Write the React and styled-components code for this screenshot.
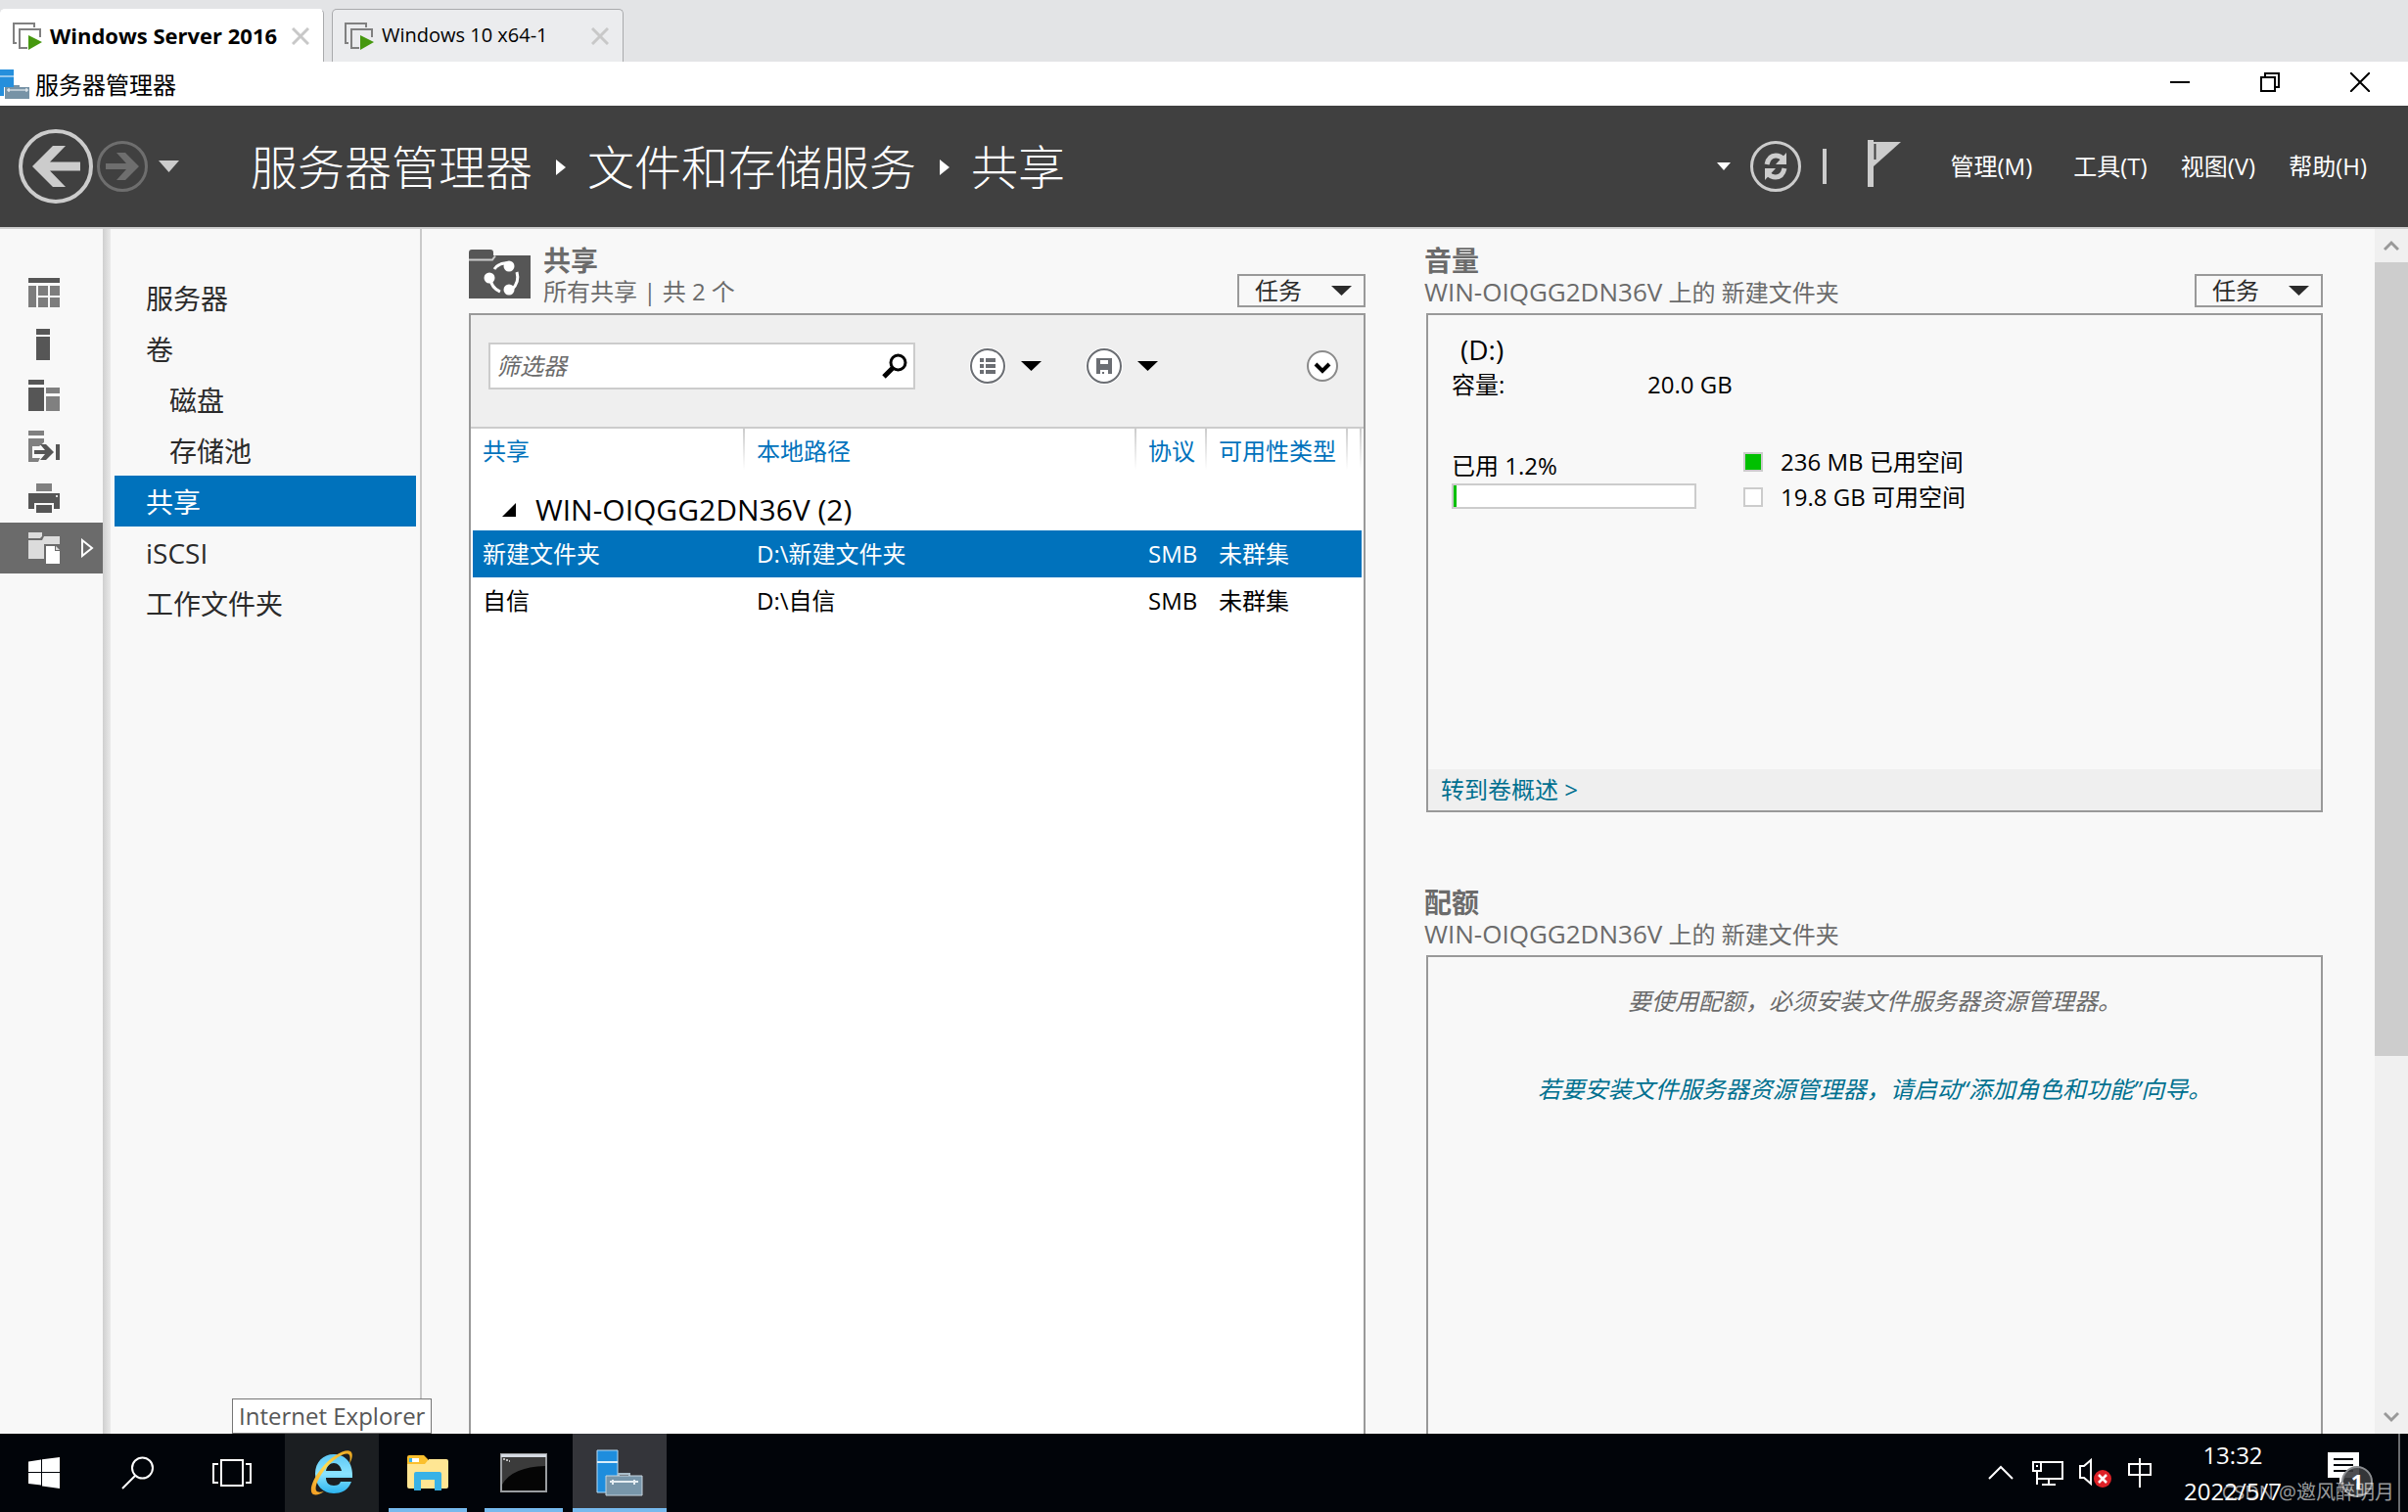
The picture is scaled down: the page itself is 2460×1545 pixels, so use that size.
import React from "react";
import styled, { createGlobalStyle, css } from "styled-components";

const fontStack = `"Open Sans", "Noto Sans CJK SC", sans-serif`;

const GlobalStyle = createGlobalStyle`
  *, *::before, *::after { box-sizing: border-box; }
  body { margin: 0; font-family: ${fontStack}; font-size: 24px; line-height: 32px; color: #000; background: #f8f8f8; }
  button, input { font: inherit; color: inherit; }
  a { color: inherit; text-decoration: none; }
  h1, h2, p, ul, ol, dl, dd { margin: 0; padding: 0; font-weight: inherit; }
  ul, ol { list-style: none; }
  svg { display: block; flex: none; }
`;

const Screen = styled.div`
  display: flex;
  flex-direction: column;
  height: 100vh;
  overflow: hidden;
`;

const PlainButton = styled.button`
  display: flex;
  align-items: center;
  justify-content: center;
  padding: 0;
  border: 0;
  background: none;
  flex: none;
`;

/* ---------- virtual machine tabs ---------- */
const TabStrip = styled.div`
  display: flex;
  align-items: flex-end;
  gap: 8px;
  height: 63px;
  flex: none;
  background: #e3e4e6;
`;

const VmTab = styled.div`
  display: flex;
  align-items: center;
  width: ${(p) => (p.$active ? 331 : 298)}px;
  height: 54px;
  padding: 0 14px 0 12px;
  border: 1px solid ${(p) => (p.$active ? "#fff" : "#a9aaac")};
  border-right-color: #a9aaac;
  border-bottom: 0;
  border-radius: 5px 5px 0 0;
  background: ${(p) => (p.$active ? "#fff" : "#ebecee")};
  font-size: ${(p) => (p.$active ? 22 : 20)}px;
  font-weight: ${(p) => (p.$active ? 700 : 400)};
  white-space: nowrap;
`;

const TabName = styled.span`
  flex: 1;
  padding: 0 0 2px 8px;
`;

/* ---------- window title ---------- */
const TitleBar = styled.header`
  display: flex;
  align-items: center;
  height: 45px;
  flex: none;
  background: #fff;
`;

const WindowTitle = styled.span`
  flex: 1;
  padding: 2px 0 0 5px;
`;

const WindowButton = styled(PlainButton)`
  width: 92px;
  height: 45px;
  padding-bottom: 4px;
`;

const WindowButtons = styled.div`
  display: flex;
  padding-right: 3px;
`;

/* ---------- navigation header ---------- */
const NavHeader = styled.div`
  display: flex;
  align-items: center;
  height: 126px;
  flex: none;
  padding: 0 42px 0 19px;
  background: #404040;
  border-bottom: 2px solid #cfcfcf;
  color: #fff;
`;

const History = styled.div`
  display: flex;
  align-items: center;
  gap: 4px;
  width: 237px;
  flex: none;
`;

const HistoryMenu = styled(PlainButton)`
  margin-left: 7px;
`;

const Crumbs = styled.ol`
  display: flex;
  align-items: center;
  flex: 1;
  padding-top: 2px;
  font-size: 48px;
  line-height: 64px;
  font-weight: 300;
  white-space: nowrap;
`;

const Crumb = styled.li`
  display: flex;
  align-items: center;
  gap: 24px;
  padding-right: 22px;
`;

const HeaderTools = styled.div`
  display: flex;
  align-items: center;
`;

const Refresh = styled(PlainButton)`
  margin: 0 22px 0 20px;
`;

const Flag = styled(PlainButton)`
  margin: 0 51px 6px 42px;
`;

const Menus = styled.nav`
  display: flex;
  gap: 34px;
  white-space: nowrap;
`;

const MenuButton = styled(PlainButton)`
  &:first-child { margin-right: 8px; }
`;

const Divider = styled.span`
  width: 4px;
  height: 36px;
  background: #ccc;
`;

/* ---------- body ---------- */
const Body = styled.div`
  display: flex;
  flex: 1;
  min-height: 0;
  background: #f8f8f8;
`;

const Rail = styled.nav`
  display: flex;
  flex-direction: column;
  width: 105px;
  flex: none;
  padding-top: 40px;
`;

const RailButton = styled(PlainButton)`
  justify-content: flex-start;
  gap: 22px;
  height: 52px;
  padding-left: 29px;
  background: ${(p) => (p.$active ? "#6b6b6b" : "none")};
`;

const Splitter = styled.div`
  width: 8px;
  flex: none;
  background: linear-gradient(90deg, #cfcfcf, #eaeaea);
`;

const Sidebar = styled.nav`
  width: 318px;
  flex: none;
  padding: 44px 4px 0;
  border-right: 2px solid #c9c9c9;
`;

const SideLink = styled.a`
  display: block;
  height: 52px;
  padding-left: ${(p) => (p.$nested ? 56 : 32)}px;
  font-size: 28px;
  line-height: 54px;
  color: ${(p) => (p.$active ? "#fff" : "#2b2b2b")};
  background: ${(p) => (p.$active ? "#0072bc" : "none")};
`;

const Content = styled.main`
  display: grid;
  grid-template-columns: minmax(0, 1fr) minmax(0, 1fr);
  gap: 62px;
  flex: 1;
  min-width: 0;
  padding: 0 53px 0 48px;
  overflow: hidden;
`;

const Column = styled.div`
  display: flex;
  flex-direction: column;
  gap: 60px;
  min-height: 0;
`;

const Section = styled.section`
  display: flex;
  flex-direction: column;
  flex: ${(p) => (p.$grow ? "1" : "none")};
  min-height: 0;
`;

const SectionHead = styled.div`
  display: flex;
  align-items: flex-start;
  height: 86px;
  flex: none;
  padding-top: 16px;
  color: #6b6b6b;
`;

const SectionIcon = styled.span`
  padding: 4px 15px 0 0;
`;

const Heading = styled.div`
  flex: 1;
  min-width: 0;
  margin-left: -2px;
  white-space: nowrap;
`;

const SectionTitle = styled.h2`
  font-size: 28px;
  line-height: 32px;
  font-weight: 700;
`;

const ServerName = styled.span`
  font-size: 26px;
`;

const TaskButton = styled(PlainButton)`
  justify-content: space-between;
  width: 131px;
  height: 34px;
  margin-top: 30px;
  padding: 0 12px 0 16px;
  border: 2px solid #999;
  color: #2b2b2b;
  line-height: 28px;
`;

const Panel = styled.div`
  display: flex;
  flex-direction: column;
  border: 2px solid #999;
  ${(p) => p.$cut && css`
    flex: 1;
    border-bottom: 0;
  `}
  ${(p) => p.$fill && css`
    background: #fff;
  `}
`;

/* ---------- share list ---------- */
const Toolbar = styled.div`
  display: flex;
  align-items: center;
  height: 116px;
  padding: 0 26px 10px 18px;
  background: #efefef;
  border-bottom: 2px solid #ccc;
`;

const FilterBox = styled.label`
  display: flex;
  align-items: center;
  width: 436px;
  height: 48px;
  padding: 0 6px;
  border: 2px solid #ccc;
  background: #fff;
`;

const FilterInput = styled.input`
  flex: 1;
  min-width: 0;
  padding: 0;
  border: 0;
  outline: 0;
  background: none;
  font-style: italic;
  &::placeholder { color: #6b6b6b; opacity: 1; }
`;

const ToolGroup = styled.div`
  display: flex;
  align-items: center;
  gap: 15px;
  margin-left: ${(p) => (p.$first ? 55 : 45)}px;
`;

const ExpandButton = styled(PlainButton)`
  margin-left: auto;
`;

const ShareTable = styled.table`
  width: calc(100% - 4px);
  margin: 0 2px;
  table-layout: fixed;
  border-collapse: collapse;
  text-align: left;
  white-space: nowrap;
`;

const HeadCell = styled.th`
  height: 62px;
  padding: 0 0 16px ${(p) => (p.$first ? 10 : 12)}px;
  color: #0072bc;
  font-weight: 400;
  background: linear-gradient(#ccc, #fff) right top / 2px 42px no-repeat;
`;

const GroupCell = styled.td`
  height: 42px;
  padding: 0 0 0 30px;
  font-size: 30px;
`;

const GroupLabel = styled.span`
  display: flex;
  align-items: center;
  gap: 20px;
`;

const Row = styled.tr`
  color: ${(p) => (p.$selected ? "#fff" : "#000")};
  background: ${(p) => (p.$selected ? "#0072bc" : "none")};
`;

const Cell = styled.td`
  height: 48px;
  padding: 0 0 0 ${(p) => (p.$first ? 10 : 12)}px;
`;

const Col = styled.col`
  width: ${(p) => (p.$w ? `${p.$w}px` : "auto")};
`;

/* ---------- volume ---------- */
const VolumeInfo = styled.div`
  min-height: 464px;
  padding: 15px 24px;
`;

const VolumeName = styled.div`
  padding-left: 9px;
  font-size: 28px;
  line-height: 40px;
`;

const Capacity = styled.dl`
  display: grid;
  grid-template-columns: 200px auto;
`;

const Usage = styled.div`
  display: grid;
  grid-template-columns: 250px auto;
  gap: 48px;
  margin-top: 45px;
`;

const UsedLabel = styled.div`
  padding: 6px 0 2px;
`;

const Track = styled.div`
  height: 26px;
  border: 2px solid #ccc;
  background: #fff;
`;

const Fill = styled.div`
  height: 100%;
  background: #00c000;
`;

const LegendItem = styled.li`
  display: flex;
  align-items: center;
  gap: 18px;
  line-height: 36px;
`;

const Swatch = styled.span`
  width: 20px;
  height: 20px;
  border: 2px solid #ccc;
  background: ${(p) => p.$color};
`;

const PanelFooter = styled.div`
  height: 42px;
  padding-left: 13px;
  background: #efefef;
  color: #00708f;
  line-height: 42px;
`;

const QuotaText = styled.div`
  display: flex;
  flex-direction: column;
  align-items: center;
  gap: 58px;
  padding-top: 29px;
  color: #6b6b6b;
  font-style: italic;
`;

const QuotaLink = styled.a`
  color: #00708f;
`;

/* ---------- scroll bar ---------- */
const ScrollBar = styled.div`
  display: flex;
  flex-direction: column;
  width: 34px;
  flex: none;
  background: #f0f0f0;
`;

const ScrollStep = styled(PlainButton)`
  height: 34px;
`;

const ScrollTrack = styled.div`
  flex: 1;
`;

const Thumb = styled.div`
  height: 69.7%;
  background: #cdcdcd;
`;

/* ---------- taskbar ---------- */
const Taskbar = styled.footer`
  position: relative;
  display: flex;
  height: 80px;
  flex: none;
  background: #010409;
  color: #fff;
`;

const TaskTools = styled.div`
  display: flex;
  margin: 0 6px 0 -3px;
`;

const AppButton = styled(PlainButton)`
  width: 96px;
  background: ${(p) => p.$bg || "none"};
  box-shadow: ${(p) => (p.$full ? "inset 0 -4px #76b9ed" : "none")};
`;

const RunningButton = styled(AppButton)`
  width: 80px;
  margin: 0 ${(p) => (p.$last ? 10 : 8)}px 0 10px;
  box-shadow: inset 0 -4px #76b9ed;
`;

const TaskApps = styled.div`
  display: flex;
  flex: 1;
`;

const Tray = styled.div`
  display: flex;
  align-items: center;
  gap: 16px;
`;

const TrayToggle = styled(PlainButton)`
  margin-right: 3px;
`;

const Clock = styled.div`
  width: 116px;
  margin-left: 9px;
  text-align: center;
  line-height: 37px;
`;

const Notices = styled(PlainButton)`
  margin: 7px 24px 0 39px;
`;

const ShowDesktop = styled(PlainButton)`
  width: 10px;
  align-self: stretch;
  border-left: 2px solid #6a6c6f;
`;

const Tooltip = styled.div`
  position: absolute;
  left: 237px;
  bottom: 80px;
  height: 36px;
  padding: 0 6px;
  border: 1px solid #767676;
  background: #fff;
  color: #575757;
  line-height: 34px;
  white-space: nowrap;
`;

const Watermark = styled.div`
  position: absolute;
  right: 14px;
  bottom: 4px;
  color: rgba(255, 255, 255, 0.6);
  font-size: 20px;
  white-space: nowrap;
`;

/* ---------- icons ---------- */
const VmIcon = () => (
  <svg width="30" height="30" viewBox="0 0 30 30" fill="none">
    <path d="M22 6V2H1v20h3" stroke="#808080" strokeWidth="2" />
    <path d="M15 27H7V8h21v8" stroke="#808080" strokeWidth="2" />
    <path d="M16 14l14 7-14 8z" fill="#46980f" />
  </svg>
);

const TabClose = () => (
  <svg width="18" height="18" viewBox="0 0 18 18" stroke="#c8c8c8" strokeWidth="3">
    <path d="M1 1l16 16M17 1L1 17" />
  </svg>
);

const ServerSmall = () => (
  <svg width="31" height="32" viewBox="0 0 31 32">
    <path d="M0 1h14v27H0z" fill="#258fdc" />
    <path d="M0 8h14" stroke="#fff" />
    <path d="M4 19h10v-3h7v3h10v13H4z" fill="#fff" />
    <path d="M5 19h25v12H5z" fill="#7793a6" />
    <path d="M14 17h6v2h-6z" fill="#7793a6" />
    <path d="M7 22h22M9 20v4M27 20v4" stroke="#fff" />
  </svg>
);

const Tri = ({ w = 21, h = 10, color = "#000" }) => (
  <svg width={w} height={h} viewBox="0 0 20 10" preserveAspectRatio="none">
    <path d="M0 0h20L10 10z" fill={color} />
  </svg>
);

const CrumbArrow = () => (
  <svg width="10" height="16" viewBox="0 0 10 16"><path d="M0 0l10 8-10 8z" fill="#fff" /></svg>
);

const BackIcon = () => (
  <svg width="76" height="76" viewBox="0 0 76 76" fill="none">
    <circle cx="38" cy="38" r="36" stroke="#ccc" strokeWidth="4" />
    <path d="M14 38L35 17h13L32 33.500h31v9H32L48 59H35z" fill="#ccc" />
  </svg>
);

const ForwardIcon = () => (
  <svg width="52" height="52" viewBox="0 0 52 52" fill="none">
    <circle cx="26" cy="26" r="24.500" stroke="#6e6e6e" strokeWidth="3" />
    <path d="M43 26L29 12h-9l10 11H9v6h21L20 40h9z" fill="#6e6e6e" />
  </svg>
);

const RefreshIcon = () => (
  <svg width="52" height="52" viewBox="0 0 52 52" fill="none">
    <circle cx="26" cy="26" r="24.500" stroke="#ccc" strokeWidth="3" />
    <path d="M17 24q2-9 9-9 5 0 8 4" stroke="#ccc" strokeWidth="5" />
    <path d="M37 12v12H26z" fill="#ccc" />
    <path d="M35 28q-2 9-9 9-5 0-8-4" stroke="#ccc" strokeWidth="5" />
    <path d="M15 40V28h11z" fill="#ccc" />
  </svg>
);

const FlagIcon = () => (
  <svg width="34" height="48" viewBox="0 0 34 48">
    <path d="M0 0h6v48H0z" fill="#ccc" />
    <path d="M6 2h28L6 27z" fill="#ccc" />
    <path d="M7.500 4v16" stroke="#404040" strokeWidth="2" />
  </svg>
);

const RailIcons = {
  dashboard: (
    <svg width="32" height="32" viewBox="0 0 32 32">
      <path d="M0 0h32v5H0z" fill="#565656" />
      <path d="M0 8h8v22H0zM10 8h10v10H10zM22 8h10v10H22zM10 20h10v10H10zM22 20h10v10H22z" fill="#7d7d7d" />
    </svg>
  ),
  local: (
    <svg width="32" height="32" viewBox="0 0 32 32"><path d="M8 0h14v6H8zM8 8h14v24H8z" fill="#565656" /></svg>
  ),
  all: (
    <svg width="32" height="32" viewBox="0 0 32 32">
      <path d="M0 0h16v5H0zM0 8h16v24H0z" fill="#565656" />
      <path d="M18 8h14v6H18zM18 17h14v15H18z" fill="#808080" />
    </svg>
  ),
  failover: (
    <svg width="32" height="32" viewBox="0 0 32 32">
      <path d="M0 0h16v5H0zM0 8h16v4l-5 4H4v12h8l-2 4H0z" fill="#808080" />
      <path d="M6 20h11l-5-6h6l8 8-8 8h-6l5-6H6z" fill="#565656" />
      <path d="M28 14h4v16h-4z" fill="#565656" />
    </svg>
  ),
  print: (
    <svg width="32" height="32" viewBox="0 0 32 32">
      <path d="M8 2h16v8H8z" fill="#808080" />
      <path d="M0 12h32v16h-6v-6H6v6H0z" fill="#565656" />
      <path d="M8 24h16v8H8z" fill="#565656" />
      <path d="M28 14h2v2h-2z" fill="#ddd" />
    </svg>
  ),
  storage: (
    <svg width="32" height="32" viewBox="0 0 32 32">
      <path d="M0 0h14v4l-2 2H0zM0 8h14l2-4h16v8H16v15H0z" fill="#dcdcdc" />
      <path d="M18 14h9v5h5v13H18z" fill="#fff" />
      <path d="M28 14l4 4h-4z" fill="#dcdcdc" />
    </svg>
  ),
};

const ShareIcon = () => (
  <svg width="63" height="52" viewBox="0 0 63 52" fill="none">
    <path d="M0 4q0-3 3-3h19q3 0 3 3v3h38v44H0z" fill="#565656" />
    <path d="M0 11.500h24l3-4" stroke="#ccc" strokeWidth="2" />
    <g stroke="#fff" strokeWidth="3">
      <path d="M26 21q5-7 14-6" />
      <path d="M49 24q3 10-5 18" />
      <path d="M22 31q1 9 10 13" />
    </g>
    <circle cx="41" cy="18" r="5.500" fill="#fff" />
    <circle cx="21" cy="30" r="5.500" fill="#fff" />
    <circle cx="41" cy="42" r="5.500" fill="#fff" />
  </svg>
);

const FilterSearch = () => (
  <svg width="26" height="26" viewBox="0 0 26 26" fill="none" stroke="#000">
    <circle cx="16.500" cy="9.500" r="7.500" strokeWidth="3" />
    <path d="M11 15l-9 9" strokeWidth="5" />
  </svg>
);

const ListIcon = () => (
  <svg width="38" height="38" viewBox="0 0 38 38">
    <circle cx="19" cy="19" r="19" fill="#fff" />
    <circle cx="19" cy="19" r="17" fill="#fff" stroke="#6b6e73" strokeWidth="2" />
    <path d="M11 11h4v4h-4zM17 11h10v4H17zM11 17h4v4h-4zM17 17h10v4H17zM11 23h4v4h-4zM17 23h10v4H17z" fill="#6b6e73" />
  </svg>
);

const SaveIcon = () => (
  <svg width="38" height="38" viewBox="0 0 38 38">
    <circle cx="19" cy="19" r="19" fill="#fff" />
    <circle cx="19" cy="19" r="17" fill="#fff" stroke="#6b6e73" strokeWidth="2" />
    <path d="M11 11h16v16h-4v-4h-8v4h-4z" fill="#6b6e73" />
    <path d="M15 13h8v4h-8z" fill="#fff" />
    <path d="M17 25h2v2h-2z" fill="#6b6e73" />
  </svg>
);

const ExpandIcon = () => (
  <svg width="32" height="32" viewBox="0 0 32 32" fill="none">
    <circle cx="16" cy="16" r="15" fill="#fff" stroke="#8a8a8a" strokeWidth="2" />
    <path d="M9 14l7 7 7-7" stroke="#000" strokeWidth="4" />
  </svg>
);

const ScrollChevron = ({ down }) => (
  <svg width="16" height="12" viewBox="0 0 16 12" fill="none" stroke="#999" strokeWidth="3">
    <path d={down ? "M1 2l7 7 7-7" : "M1 10l7-7 7 7"} />
  </svg>
);

const StartIcon = () => (
  <svg width="32" height="32" viewBox="0 0 32 32" fill="#fff">
    <path d="M0 4.500L13 2.500V15H0zM14 2.300L32 0v15H14zM0 16h13v12.500L0 27zM14 16h18v16l-18-2.500z" />
  </svg>
);

const SearchIcon = () => (
  <svg width="34" height="34" viewBox="0 0 34 34" fill="none" stroke="#fff" strokeWidth="2">
    <circle cx="21.500" cy="12" r="10.500" />
    <path d="M14 20L1 33" />
  </svg>
);

const TaskViewIcon = () => (
  <svg width="40" height="28" viewBox="0 0 40 28" fill="none" stroke="#fff" strokeWidth="2">
    <path d="M9 1h22v26H9zM6 5H1v19h5M34 5h5v19h-5" />
  </svg>
);

const IeIcon = () => (
  <svg width="46" height="46" viewBox="0 0 46 46" fill="none">
    <defs>
      <linearGradient id="ieBlue" x1="0" y1="0" x2="0" y2="1">
        <stop offset="0" stopColor="#5cc8f5" />
        <stop offset="0.5" stopColor="#8be4ff" />
        <stop offset="1" stopColor="#2bb3ee" />
      </linearGradient>
      <linearGradient id="ieGold" x1="0" y1="1" x2="1" y2="0">
        <stop offset="0" stopColor="#f29a1f" />
        <stop offset="0.5" stopColor="#ffdc52" />
        <stop offset="1" stopColor="#e9a21c" />
      </linearGradient>
    </defs>
    <path
      fill="url(#ieBlue)"
      fillRule="evenodd"
      d="M25 4C14 4 6 12 6 24s8 20 19 20c9 0 15-4 18-12H32c-1 3-4 4-7 4-5 0-8-3-8-8h27C45 13 37 4 25 4zM17 21c1-5 4-8 8-8s7 3 8 8z"
    />
    <path
      fill="url(#ieGold)"
      d="M41 14c3-6 4-11 1-13C37-2 22 6 12 19 3 30-1 42 4 45c3 1 7 0 11-3-4 1-7 1-8-1-2-4 3-15 11-24C26 8 36 2 40 4c2 1 2 5 1 10z"
    />
  </svg>
);

const FolderIcon = () => (
  <svg width="42" height="36" viewBox="0 0 42 36">
    <path d="M0 2q0-2 2-2h15l4 4v6H0z" fill="#fbc02d" />
    <path d="M2 3h10v4H2z" fill="#fff" />
    <path d="M2 3h3v4H2z" fill="#3fb4e8" />
    <path d="M0 9h18l4-5h18q2 0 2 2v26q0 2-2 2H2q-2 0-2-2z" fill="#ffe693" />
    <path d="M7 19q0-2 2-2h24q2 0 2 2v17h-7V25H14v11H7z" fill="#38b2e7" />
  </svg>
);

const CmdIcon = () => (
  <svg width="48" height="40" viewBox="0 0 48 40">
    <path d="M1 1h46v38H1z" fill="#050505" stroke="#9a9da0" strokeWidth="2" />
    <path d="M2 4h44v9Q12 14 2 32z" fill="#3b3b3b" />
    <path d="M1 1h46v3H1z" fill="#d5dae2" />
    <path d="M3 6h2M6 7h2M9 8h1" stroke="#bbb" strokeWidth="2" />
  </svg>
);

const ServerIcon = () => (
  <svg width="48" height="48" viewBox="0 0 48 48" fill="none">
    <path d="M1 1h21v43H1z" fill="#1e8ddd" stroke="#b7dcf5" />
    <path d="M1 13h21" stroke="#d8edfa" strokeWidth="2" />
    <path d="M23 28v-3h11v3" stroke="#a9bcc8" strokeWidth="2" />
    <path d="M10 27h37v20H10z" fill="#7896aa" stroke="#c7d5de" />
    <path d="M14 33h29M17 31v5M39 31v5" stroke="#e5edf2" strokeWidth="2" />
  </svg>
);

const TrayUp = () => (
  <svg width="26" height="16" viewBox="0 0 26 16" fill="none" stroke="#fff" strokeWidth="2">
    <path d="M1 14L13 2l12 12" />
  </svg>
);

const NetworkIcon = () => (
  <svg width="32" height="28" viewBox="0 0 32 28" fill="none" stroke="#fff" strokeWidth="2">
    <path d="M9 3h22v17H5M1 3h8v9H1zM5 12v14M10 26h14M17 20v6" />
    <path d="M4 7h2" />
  </svg>
);

const VolumeIcon = () => (
  <svg width="34" height="30" viewBox="0 0 34 30" fill="none">
    <path d="M1 8h4l7-6v24l-7-6H1z" stroke="#fff" strokeWidth="2" />
    <circle cx="24" cy="21" r="9" fill="#dd2127" />
    <path d="M20 17l8 8M28 17l-8 8" stroke="#fff" strokeWidth="2.500" />
  </svg>
);

const ImeIcon = () => (
  <svg width="24" height="30" viewBox="0 0 24 30" fill="none" stroke="#fff" strokeWidth="2">
    <path d="M1 6h22v11H1zM12 0v30" />
  </svg>
);

const NoticeIcon = () => (
  <svg width="48" height="49" viewBox="0 0 48 49">
    <path d="M0 0h32v26H18l-6 6v-6H0z" fill="#fff" />
    <path d="M6 7h20M6 13h20M6 19h20" stroke="#010409" strokeWidth="2" />
    <circle cx="30" cy="30" r="15" fill="#3a3b3e" fillOpacity="0.9" stroke="#8c8e91" strokeWidth="2" />
    <text x="30" y="38" textAnchor="middle" fontSize="22" fontWeight="700" fill="#fff">1</text>
  </svg>
);

/* ---------- data ---------- */
const railItems = [
  ["dashboard", "仪表板"],
  ["local", "本地服务器"],
  ["all", "所有服务器"],
  ["failover", "远程访问"],
  ["print", "打印服务"],
  ["storage", "文件和存储服务"],
];

const sideItems = [
  { name: "服务器" },
  { name: "卷" },
  { name: "磁盘", nested: true },
  { name: "存储池", nested: true },
  { name: "共享", active: true },
  { name: "iSCSI" },
  { name: "工作文件夹" },
];

const shares = [
  { name: "新建文件夹", path: "D:\\新建文件夹", selected: true },
  { name: "自信", path: "D:\\自信" },
];

const menus = ["管理(M)", "工具(T)", "视图(V)", "帮助(H)"];
const crumbs = ["服务器管理器", "文件和存储服务", "共享"];
const usedPercent = 1.2;

function SectionHeader({ icon, title, subtitle, tasks }) {
  return (
    <SectionHead>
      {icon && <SectionIcon>{icon}</SectionIcon>}
      <Heading>
        <SectionTitle>{title}</SectionTitle>
        <p>{subtitle}</p>
      </Heading>
      {tasks && (
        <TaskButton type="button">
          任务
          <Tri color="#2b2b2b" />
        </TaskButton>
      )}
    </SectionHead>
  );
}

function Shares() {
  return (
    <Section $grow>
      <SectionHeader icon={<ShareIcon />} title="共享" subtitle="所有共享 | 共 2 个" tasks />
      <Panel $cut $fill>
        <Toolbar>
          <FilterBox>
            <FilterInput type="text" placeholder="筛选器" aria-label="筛选器" />
            <FilterSearch />
          </FilterBox>
          <ToolGroup $first>
            <PlainButton type="button" aria-label="条件"><ListIcon /></PlainButton>
            <PlainButton type="button" aria-label="条件菜单"><Tri /></PlainButton>
          </ToolGroup>
          <ToolGroup>
            <PlainButton type="button" aria-label="保存"><SaveIcon /></PlainButton>
            <PlainButton type="button" aria-label="保存菜单"><Tri /></PlainButton>
          </ToolGroup>
          <ExpandButton type="button" aria-label="展开"><ExpandIcon /></ExpandButton>
        </Toolbar>
        <ShareTable>
          <colgroup>
            <Col $w={278} />
            <Col />
            <Col $w={72} />
            <Col $w={144} />
            <Col $w={14} />
          </colgroup>
          <thead>
            <tr>
              <HeadCell $first>共享</HeadCell>
              <HeadCell>本地路径</HeadCell>
              <HeadCell>协议</HeadCell>
              <HeadCell>可用性类型</HeadCell>
              <HeadCell />
            </tr>
          </thead>
          <tbody>
            <tr>
              <GroupCell colSpan={5}>
                <GroupLabel>
                  <svg width="14" height="14" viewBox="0 0 14 14"><path d="M14 0v14H0z" /></svg>
                  WIN-OIQGG2DN36V (2)
                </GroupLabel>
              </GroupCell>
            </tr>
            {shares.map((s) => (
              <Row key={s.name} $selected={s.selected}>
                <Cell $first>{s.name}</Cell>
                <Cell>{s.path}</Cell>
                <Cell>SMB</Cell>
                <Cell colSpan={2}>未群集</Cell>
              </Row>
            ))}
          </tbody>
        </ShareTable>
      </Panel>
    </Section>
  );
}

const sourceShare = (
  <>
    <ServerName>WIN-OIQGG2DN36V</ServerName> 上的 新建文件夹
  </>
);

function Volume() {
  return (
    <Section>
      <SectionHeader title="音量" subtitle={sourceShare} tasks />
      <Panel>
        <VolumeInfo>
          <VolumeName>(D:)</VolumeName>
          <Capacity>
            <dt>容量:</dt>
            <dd>20.0 GB</dd>
          </Capacity>
          <Usage>
            <div>
              <UsedLabel id="used">已用 1.2%</UsedLabel>
              <Track role="progressbar" aria-labelledby="used" aria-valuenow={usedPercent}>
                <Fill style={{ width: `${usedPercent}%` }} />
              </Track>
            </div>
            <ul>
              <LegendItem><Swatch $color="#00c000" />236 MB 已用空间</LegendItem>
              <LegendItem><Swatch $color="#fff" />19.8 GB 可用空间</LegendItem>
            </ul>
          </Usage>
        </VolumeInfo>
        <PanelFooter><a href="#volumes">转到卷概述 &gt;</a></PanelFooter>
      </Panel>
    </Section>
  );
}

function Quota() {
  return (
    <Section $grow>
      <SectionHeader title="配额" subtitle={sourceShare} />
      <Panel $cut>
        <QuotaText>
          <p>要使用配额，必须安装文件服务器资源管理器。</p>
          <QuotaLink href="#wizard">若要安装文件服务器资源管理器，请启动“添加角色和功能”向导。</QuotaLink>
        </QuotaText>
      </Panel>
    </Section>
  );
}

export default function App() {
  return (
    <>
      <GlobalStyle />
      <Screen>
        <TabStrip>
          <VmTab $active>
            <VmIcon />
            <TabName>Windows Server 2016</TabName>
            <PlainButton type="button" aria-label="关闭"><TabClose /></PlainButton>
          </VmTab>
          <VmTab>
            <VmIcon />
            <TabName>Windows 10 x64-1</TabName>
            <PlainButton type="button" aria-label="关闭"><TabClose /></PlainButton>
          </VmTab>
        </TabStrip>

        <TitleBar>
          <ServerSmall />
          <WindowTitle>服务器管理器</WindowTitle>
          <WindowButtons>
            <WindowButton type="button" aria-label="最小化">
              <svg width="20" height="20" viewBox="0 0 20 20"><path d="M0 10h20" stroke="#000" strokeWidth="2" /></svg>
            </WindowButton>
            <WindowButton type="button" aria-label="还原">
              <svg width="20" height="20" viewBox="0 0 20 20" fill="none" stroke="#000" strokeWidth="2">
                <path d="M1 5h14v14H1zM5 5V1h14v14h-4" />
              </svg>
            </WindowButton>
            <WindowButton type="button" aria-label="关闭窗口">
              <svg width="20" height="20" viewBox="0 0 20 20" stroke="#000" strokeWidth="2"><path d="M0 0l20 20M20 0L0 20" /></svg>
            </WindowButton>
          </WindowButtons>
        </TitleBar>

        <NavHeader>
          <History>
            <PlainButton type="button" aria-label="后退"><BackIcon /></PlainButton>
            <PlainButton type="button" aria-label="前进"><ForwardIcon /></PlainButton>
            <HistoryMenu type="button" aria-label="历史记录"><Tri h={12} color="#ccc" /></HistoryMenu>
          </History>
          <Crumbs>
            {crumbs.map((c, i) => (
              <Crumb key={c}>
                {c}
                {i < crumbs.length - 1 && <CrumbArrow />}
              </Crumb>
            ))}
          </Crumbs>
          <HeaderTools>
            <PlainButton type="button" aria-label="更多"><Tri w={14} h={8} color="#fff" /></PlainButton>
            <Refresh type="button" aria-label="刷新"><RefreshIcon /></Refresh>
            <Divider />
            <Flag type="button" aria-label="通知"><FlagIcon /></Flag>
            <Menus>
              {menus.map((m) => (
                <MenuButton type="button" key={m}>{m}</MenuButton>
              ))}
            </Menus>
          </HeaderTools>
        </NavHeader>

        <Body>
          <Rail>
            {railItems.map(([key, label]) => (
              <RailButton type="button" key={key} aria-label={label} $active={key === "storage"}>
                {RailIcons[key]}
                {key === "storage" && (
                  <svg width="13" height="20" viewBox="0 0 13 20" fill="none" stroke="#fff" strokeWidth="2">
                    <path d="M1 2l10 8-10 8z" />
                  </svg>
                )}
              </RailButton>
            ))}
          </Rail>
          <Splitter />
          <Sidebar>
            {sideItems.map((s) => (
              <SideLink key={s.name} href={`#${s.name}`} $nested={s.nested} $active={s.active}>{s.name}</SideLink>
            ))}
          </Sidebar>
          <Content>
            <Column>
              <Shares />
            </Column>
            <Column>
              <Volume />
              <Quota />
            </Column>
          </Content>
          <ScrollBar>
            <ScrollStep type="button" aria-label="向上滚动"><ScrollChevron /></ScrollStep>
            <ScrollTrack><Thumb /></ScrollTrack>
            <ScrollStep type="button" aria-label="向下滚动"><ScrollChevron down /></ScrollStep>
          </ScrollBar>
        </Body>

        <Taskbar>
          <TaskApps>
            <TaskTools>
              <AppButton type="button" aria-label="开始"><StartIcon /></AppButton>
              <AppButton type="button" aria-label="搜索"><SearchIcon /></AppButton>
              <AppButton type="button" aria-label="任务视图"><TaskViewIcon /></AppButton>
            </TaskTools>
            <AppButton type="button" aria-label="Internet Explorer" $bg="#1b1e21"><IeIcon /></AppButton>
            <RunningButton type="button" aria-label="文件资源管理器"><FolderIcon /></RunningButton>
            <RunningButton type="button" aria-label="命令提示符" $last><CmdIcon /></RunningButton>
            <AppButton type="button" aria-label="服务器管理器" $bg="#34353a" $full><ServerIcon /></AppButton>
          </TaskApps>
          <Tray>
            <TrayToggle type="button" aria-label="显示隐藏的图标"><TrayUp /></TrayToggle>
            <PlainButton type="button" aria-label="网络"><NetworkIcon /></PlainButton>
            <PlainButton type="button" aria-label="音量"><VolumeIcon /></PlainButton>
            <PlainButton type="button" aria-label="输入法"><ImeIcon /></PlainButton>
            <Clock>
              <div>13:32</div>
              <div>2022/5/7</div>
            </Clock>
          </Tray>
          <Notices type="button" aria-label="操作中心"><NoticeIcon /></Notices>
          <ShowDesktop type="button" aria-label="显示桌面" />
          <Tooltip role="tooltip">Internet Explorer</Tooltip>
          <Watermark>CSDN @邀风醉明月</Watermark>
        </Taskbar>
      </Screen>
    </>
  );
}
